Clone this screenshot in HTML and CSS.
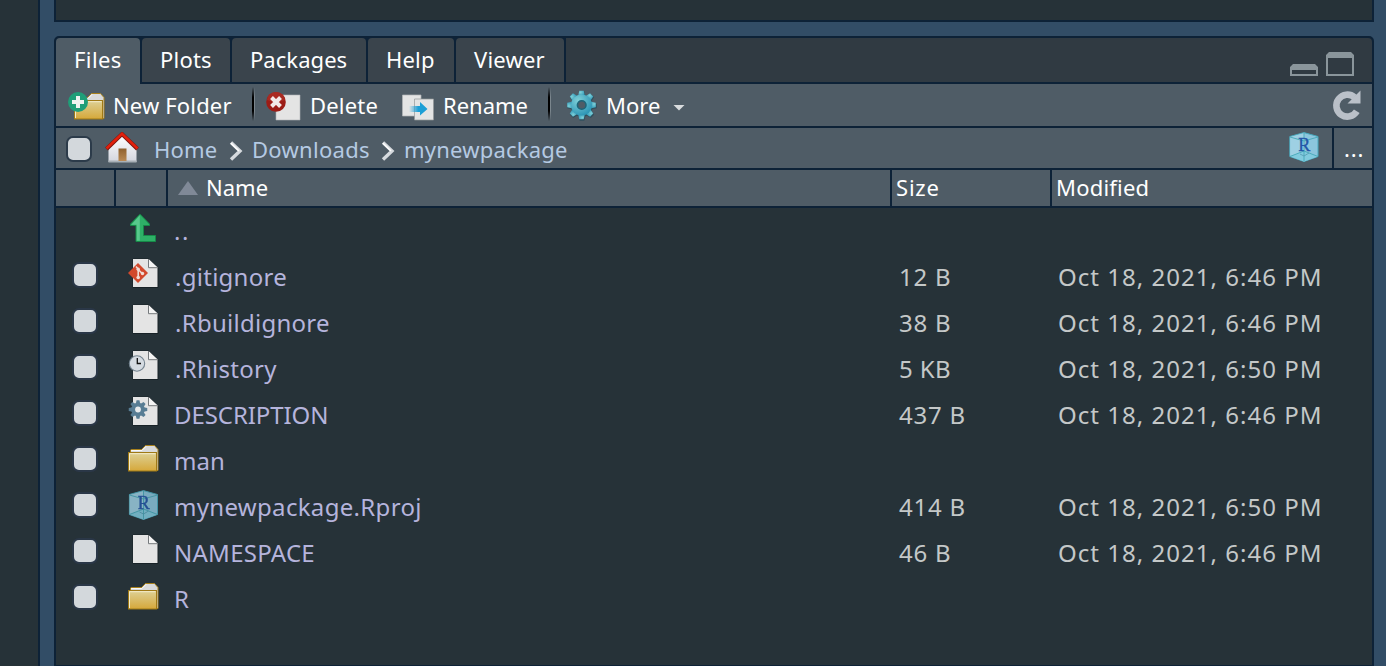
FILE: index.html
```html
<!DOCTYPE html>
<html lang="en">
<head>
<meta charset="utf-8">
<title>Files</title>
<link rel="stylesheet" href="styles.css">
</head>
<body>
<svg class="defs" width="0" height="0" aria-hidden="true">
  <defs>
    <linearGradient id="gold" x1="0" y1="0" x2="0" y2="1"><stop offset="0" stop-color="#ddd196"/><stop offset="1" stop-color="#d6a83a"/></linearGradient>
    <linearGradient id="silver" x1="0" y1="0" x2="0" y2="1"><stop offset="0" stop-color="#ffffff"/><stop offset="1" stop-color="#d3d5de"/></linearGradient>
    <linearGradient id="wood" x1="0" y1="0" x2="0" y2="1"><stop offset="0" stop-color="#8f612f"/><stop offset="1" stop-color="#b98a55"/></linearGradient>
    <linearGradient id="fadeBlue"><stop offset="0" stop-color="#1c9fd6" stop-opacity="0"/><stop offset=".5" stop-color="#1c9fd6"/></linearGradient>
    <radialGradient id="teal" cx=".35" cy=".3" r=".8"><stop offset="0" stop-color="#7fd0d8"/><stop offset="1" stop-color="#2590b2"/></radialGradient>
    <symbol id="folder" viewBox="0 0 36 46">
      <path d="M4.500 14V12l1.500-.5h9.500l4-4h9l3.500 4V32.500H28z" fill="#d9dadb" stroke="#a8811c"/>
      <path d="M5 12.500h11l4-4" fill="none" stroke="#fff" stroke-width=".8"/>
      <rect x="2.500" y="14.500" width="28" height="18.500" fill="url(#gold)" stroke="#a07a16"/>
      <path d="M3.500 32V15.700h26" fill="none" stroke="#f3eccb" stroke-width="1"/>
    </symbol>
    <symbol id="page" viewBox="0 0 36 46">
      <path d="M7 5h16l9 9v19.500H7z" fill="#0e161a" opacity=".6" stroke="#10191d"/>
      <path d="M7 5h15.500l9 9v19H7z" fill="#e4e4e4"/>
      <path d="M22.500 5v8.700H32" fill="#f4f4f4" stroke="#75797c"/>
    </symbol>
    <symbol id="cube" viewBox="0 0 30 30">
      <path d="M15 .6 29 4.500V24.500L15 29.500.8 24.500V4.500z" fill="#8cc6dd" stroke="#48a9bd"/>
      <path d="M1 5v19l14-4.500V1z" fill="#a8d6e6" opacity=".65"/>
      <path d="M1 24.500l14-5.500 14 5.500L15 29.500z" fill="#82cbde"/>
      <path d="M1 5l14 4 14-4M15 9v20M15 1v8M1 24.500l14-5.500 14 5.500" fill="none" stroke="#45a8b8" stroke-width=".9"/>
      <path d="M11 22l4 2 5-3" fill="none" stroke="#5298ae" stroke-width=".8"/>
      <text x="15.200" y="18.500" text-anchor="middle" class="cube-letter">R</text>
    </symbol>
    <symbol id="gear" viewBox="-16 -16 32 32">
      <g id="teeth">
        <path id="tooth" d="M-3.600-9l1.300-5.800h4.600L3.600-9z"/>
        <use href="#tooth" transform="rotate(45)"/><use href="#tooth" transform="rotate(90)"/><use href="#tooth" transform="rotate(135)"/><use href="#tooth" transform="rotate(180)"/><use href="#tooth" transform="rotate(225)"/><use href="#tooth" transform="rotate(270)"/><use href="#tooth" transform="rotate(315)"/>
      </g>
      <circle r="10.800"/>
    </symbol>
  </defs>
</svg>

<div class="ide">
  <div class="left-pane"></div>
  <div class="right-side">
    <div class="upper-pane"></div>
    <section class="panel">
      <nav class="tabs">
        <div class="tab active"><span class="w-files">Files</span></div>
        <div class="tab plots"><span>Plots</span></div>
        <div class="tab packages"><span class="w-packages">Packages</span></div>
        <div class="tab help"><span>Help</span></div>
        <div class="tab viewer"><span>Viewer</span></div>
        <div class="tab-rest">
          <svg width="64" height="24" viewBox="0 0 64 24"><path fill="#8a959b" fill-rule="evenodd" d="M3 12h22l3 3v9H0v-9zM2 18v4h24v-4zM39 0h22l3 3v21H36V3zM38 6v16h24V6z"/></svg>
        </div>
      </nav>

      <div class="toolbar">
        <div class="button new-folder">
          <svg width="44" height="42" viewBox="0 0 44 42">
            <use href="#folder" x="4" y="2" width="36" height="46"/>
            <circle cx="10" cy="18" r="10" fill="#1f9e78"/>
            <path d="M8 12h4v4h4v4h-4v4H8v-4H4v-4h4z" fill="#eef3f0"/>
          </svg><span>New Folder</span>
        </div>
        <i class="separator"></i>
        <div class="button delete">
          <svg width="45" height="42" viewBox="0 0 45 42">
            <path d="M12 11h24v25H12z" fill="#e4e4e4" stroke="#aeb3b5" stroke-width=".6"/>
            <circle cx="12" cy="18" r="9.800" fill="#9c1c16"/><path d="M3 16a9 8 0 0118 0 15 9 0 01-18 0z" fill="#a92a22"/>
            <path d="M7.500 13.500l9 9m0-9l-9 9" stroke="#f1e9e8" stroke-width="4"/>
          </svg><span>Delete</span>
        </div>
        <div class="button rename">
          <svg width="42" height="42" viewBox="0 0 42 42">
            <path d="M2.500 11h18.500v21H2.500z" fill="#e3e4e4" stroke="#b2b6b8" stroke-width=".7"/>
            <path d="M14.500 15h19v21h-19z" fill="#e3e4e4" stroke="#93989a" stroke-width=".7"/>
            <path d="M9 22h11v-4l7.500 7-7.500 6.500V28H9z" fill="url(#fadeBlue)"/>
          </svg><span>Rename</span>
        </div>
        <i class="separator"></i>
        <div class="button more">
          <svg width="39" height="42" viewBox="0 0 39 42">
            <use href="#gear" x="0" y="6" width="32" height="32" fill="#244a58" opacity=".7"/>
            <use href="#gear" x="0" y="5.500" width="31" height="31" fill="url(#teal)"/>
            <circle cx="15.700" cy="21" r="4.300" fill="#4f5c66" stroke="#1d6579" stroke-width="1.600"/>
          </svg><span>More</span>
          <svg class="caret" width="12" height="6" viewBox="0 0 12 6"><path d="M.5 0h11L6 5.500z" fill="#d9dcde"/></svg>
        </div>
        <svg class="refresh" width="30" height="32" viewBox="0 0 30 32">
          <path d="M24.800 22.300A11 11 0 1 1 22.500 8.200" fill="none" stroke="#bac0c8" stroke-width="6.600"/>
          <path d="M28.500 1.500V14.500H15.500l4.500-4.500z" fill="#bac0c8"/>
        </svg>
      </div>

      <div class="path">
        <i class="check"></i>
        <svg class="home" width="34" height="31" viewBox="0 0 34 31">
          <path d="M17 3L3.500 16.500V30h28V16.500z" fill="url(#silver)"/>
          <path d="M3.500 28.500h28V30.500h-28z" fill="#a8b0b6"/>
          <rect x="13.500" y="16.500" width="8" height="12.500" fill="url(#wood)"/>
          <path d="M1.500 17L17 2l15.500 15" fill="none" stroke="#7d1711" stroke-width="4"/>
          <path d="M1.500 16.500L17 1.800l15.500 14.700" fill="none" stroke="#e2200c" stroke-width="2.500"/>
        </svg>
        <a class="crumb home-link">Home</a>
        <svg class="chevron" width="14" height="20" viewBox="0 0 14 20"><path d="M2 1.500l9 8.500-9 8.500" fill="none" stroke="#d6dade" stroke-width="3.400"/><path d="M2 2.200l8 7.800" stroke="#fff" stroke-width="1.500"/></svg>
        <a class="crumb downloads">Downloads</a>
        <svg class="chevron" width="14" height="20" viewBox="0 0 14 20"><path d="M2 1.500l9 8.500-9 8.500" fill="none" stroke="#d6dade" stroke-width="3.400"/><path d="M2 2.200l8 7.800" stroke="#fff" stroke-width="1.500"/></svg>
        <a class="crumb package">mynewpackage</a>
        <svg class="path-cube" width="30" height="30"><use href="#cube" width="30" height="30"/></svg>
        <div class="browse">...</div>
      </div>

      <div class="head">
        <div></div><div></div>
        <div class="h-name"><svg width="20" height="14" viewBox="0 0 20 14"><path d="M10 0l10 14H0z" fill="#808997"/></svg><span>Name</span></div>
        <div class="h-size">Size</div>
        <div class="h-mod">Modified</div>
      </div>

      <div class="list">
        <div class="row"><span></span>
          <svg class="icon" viewBox="0 0 36 46"><path d="M14 6.200L23.500 16v1.500h-6V27.500h12v6H10V17.500H4.500V16z" fill="#2eb067" stroke="#168a48"/><path d="M13.800 7.200L5.300 16.800H10.700V32.800H13.800z" fill="#57c98c"/></svg>
          <span class="name up">..</span></div>
        <div class="row"><i class="check"></i>
          <svg class="icon" viewBox="0 0 36 46"><use href="#page" width="36" height="46"/><path d="M12 9l10 10-10 10L2 19z" fill="#d2492c"/><path d="M10 12.500l2.200 2.500v8.500M12.200 15.500l4 4" fill="none" stroke="#f0dcd5" stroke-width="1.600"/><circle cx="12.200" cy="15.300" r="1.700" fill="#f0dcd5"/><circle cx="12.200" cy="23.500" r="1.800" fill="#f0dcd5"/><circle cx="16.500" cy="19.500" r="1.700" fill="#f0dcd5"/></svg>
          <span class="name dot">.gitignore</span><span class="size">12 B</span><span class="date">Oct 18, 2021, 6:46 PM</span></div>
        <div class="row"><i class="check"></i>
          <svg class="icon" viewBox="0 0 36 46"><use href="#page" width="36" height="46"/></svg>
          <span class="name dot">.Rbuildignore</span><span class="size">38 B</span><span class="date">Oct 18, 2021, 6:46 PM</span></div>
        <div class="row"><i class="check"></i>
          <svg class="icon" viewBox="0 0 36 46"><use href="#page" width="36" height="46"/><circle cx="11" cy="17.500" r="7.700" fill="#d5dbe1" stroke="#74838f" stroke-width="1.100"/><path d="M11.300 12v5.500h3.700" fill="none" stroke="#111" stroke-width="1.300"/></svg>
          <span class="name dot">.Rhistory</span><span class="size tight">5 KB</span><span class="date">Oct 18, 2021, 6:50 PM</span></div>
        <div class="row"><i class="check"></i>
          <svg class="icon" viewBox="0 0 36 46"><use href="#page" width="36" height="46"/><use href="#gear" x="2" y="7.500" width="20" height="20" fill="#587d94"/><circle cx="12" cy="17.500" r="2.900" fill="#e8ebed"/></svg>
          <span class="name caps">DESCRIPTION</span><span class="size">437 B</span><span class="date">Oct 18, 2021, 6:46 PM</span></div>
        <div class="row"><i class="check"></i>
          <svg class="icon" viewBox="0 0 36 46"><use href="#folder" width="36" height="46"/></svg>
          <span class="name short">man</span></div>
        <div class="row"><i class="check"></i>
          <svg class="icon" viewBox="0 0 36 46"><use href="#cube" x="2.500" y="6" width="30" height="30" opacity=".82"/></svg>
          <span class="name long">mynewpackage.Rproj</span><span class="size">414 B</span><span class="date">Oct 18, 2021, 6:50 PM</span></div>
        <div class="row"><i class="check"></i>
          <svg class="icon" viewBox="0 0 36 46"><use href="#page" width="36" height="46"/></svg>
          <span class="name">NAMESPACE</span><span class="size">46 B</span><span class="date">Oct 18, 2021, 6:46 PM</span></div>
        <div class="row"><i class="check"></i>
          <svg class="icon" viewBox="0 0 36 46"><use href="#folder" width="36" height="46"/></svg>
          <span class="name">R</span></div>
      </div>
    </section>
  </div>
</div>
</body>
</html>
```
FILE: styles.css
```css
* { box-sizing: border-box; }
body {
  margin: 0;
  overflow: hidden;
  background: #324d66;
  font: 22px/1.36 "Noto Sans", sans-serif;
  letter-spacing: .2px;
  color: #fff;
  white-space: nowrap;
}
svg { display: block; flex: none; }
.defs { position: absolute; }
.cube-letter { font: 18px "Liberation Serif", serif; fill: #2457a8; stroke: #2457a8; stroke-width: .4px; letter-spacing: 0; }

.ide { display: flex; height: 666px; }
.left-pane { width: 40px; flex: none; background: #263238; border-right: 2px solid #0d2237; }
.right-side { display: flex; flex-direction: column; flex: 1; padding: 0 12px 0 14px; }
.upper-pane { height: 22px; flex: none; background: #263238; border: solid #0d2237; border-width: 0 2px 2px; }
.panel {
  flex: 1;
  display: flex;
  flex-direction: column;
  margin-top: 14px;
  border: solid #0d2237;
  border-width: 2px 2px 1px;
  border-radius: 5px 5px 0 0;
  background: #263238;
}

.tabs { display: flex; height: 46px; flex: none; background: #0d2237; }
.tab {
  display: flex;
  align-items: center;
  height: 44px;
  padding-left: 18px;
  margin-right: 2px;
  background: #3a444c;
  border-radius: 4px 4px 0 0;
}
.tab.active { width: 84px; height: 46px; padding-bottom: 2px; background: #4f5c66; }
.plots { width: 88px; }
.packages { width: 134px; }
.help { width: 86px; }
.viewer { width: 108px; }
.w-files { letter-spacing: .4px; }
.w-packages { letter-spacing: .05px; }
.tab-rest { flex: 1; height: 44px; display: flex; justify-content: flex-end; padding: 14px 18px 0 0; background: #303a42; border-radius: 0 4px 0 0; }

.toolbar { display: flex; align-items: center; height: 44px; flex: none; padding-left: 12px; background: #4f5c66; border-bottom: 2px solid #0d2237; }
.button { display: flex; align-items: center; flex: none; }
.button span { padding: 2px 0 0 1px; }
.new-folder { width: 184px; letter-spacing: .15px; }
.delete { width: 136px; margin-left: 9px; }
.rename { width: 148px; letter-spacing: 0; }
.more { margin-left: 15px; letter-spacing: 0; }
.separator { width: 3px; height: 34px; margin-top: -2px; background: linear-gradient(90deg, #000 0 66%, #7b868d 66%); -webkit-mask-image: linear-gradient(transparent, #000 30% 70%, transparent); mask-image: linear-gradient(transparent, #000 30% 70%, transparent); }
.caret { margin: 5px 0 0 13px; }
.refresh { margin: 0 10px 0 auto; }

.path { display: flex; height: 42px; flex: none; padding-left: 10px; background: #4f5c66; border-bottom: 2px solid #0d2237; color: #b5cae3; }
.check { display: block; width: 26px; height: 26px; flex: none; margin-top: 8px; background: #d3d8dc; border: 2px solid #2c3b4a; border-radius: 7px; }
.home { margin: 4px 0 0 13px; }
.crumb { flex: none; padding-top: 7px; }
.home-link { width: 75px; margin-left: 15px; }
.chevron { margin-top: 13px; }
.downloads { width: 129px; margin-left: 9px; letter-spacing: .3px; }
.package { margin-left: 9px; }
.path-cube { margin: 4px 13px 0 auto; }
.browse { width: 40px; padding: 6px 0 0 10px; border-left: 2px solid #0d2237; color: #fff; letter-spacing: .9px; }

.head { display: grid; grid-template-columns: 60px 52px 724px 160px 1fr; height: 38px; flex: none; line-height: 34px; background: #4f5c66; border-bottom: 2px solid #0d2237; }
.head > div { border-right: 2px solid #0d2237; }
.head > div:last-child { border-right: 0; }
.h-name { display: flex; align-items: center; gap: 8px; padding-left: 10px; letter-spacing: 0; }
.h-name span { margin-top: -2px; }
.h-size { padding-left: 4px; letter-spacing: .8px; }
.h-mod { padding-left: 4px; letter-spacing: .2px; }

.list { font-size: 24px; line-height: 46px; color: #b5b4dc; }
.row { display: grid; grid-template-columns: 70px 48px 724px 160px 1fr; height: 46px; }
.row .check { margin-left: 16px; border-color: #2a3747; }
.icon { width: 36px; height: 46px; }
.name { letter-spacing: .27px; }
.dot { padding-left: 1px; }
.up { letter-spacing: 1.5px; }
.caps { letter-spacing: -.08px; }
.short { letter-spacing: 0; }
.long { letter-spacing: .32px; }
.size { letter-spacing: .8px; color: #c4c8c8; padding-left: 1px; }
.tight { letter-spacing: .4px; }
.date { letter-spacing: 1.03px; color: #c4c8c8; }
```
